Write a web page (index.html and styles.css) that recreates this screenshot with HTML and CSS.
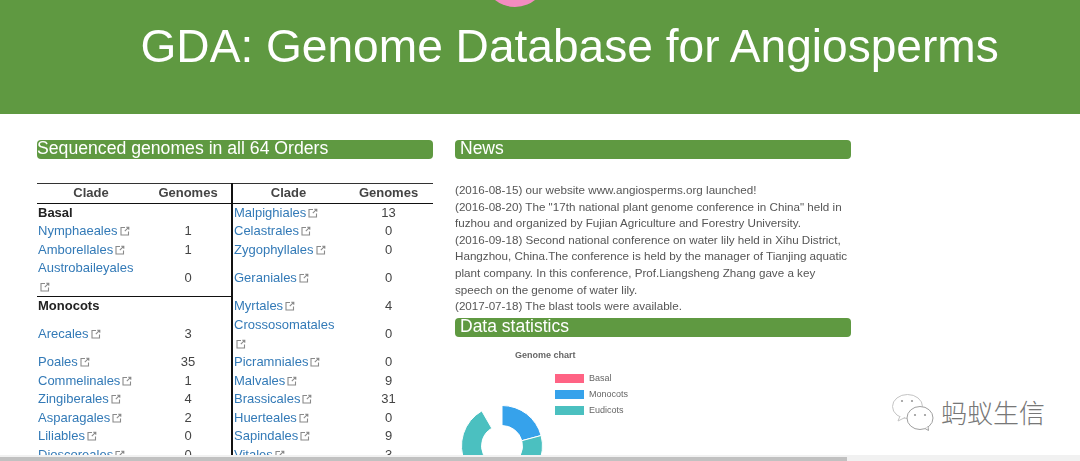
FILE: index.html
```html
<!DOCTYPE html>
<html lang="en">
<head>
<meta charset="utf-8">
<title>GDA: Genome Database for Angiosperms</title>
<link rel="stylesheet" href="styles.css">
</head>
<body>
<svg width="0" height="0" class="defs"><defs>
<symbol id="ext" viewBox="0 0 10 10"><path d="M5 1.500H1v7.500h7.500V5.500" fill="none" stroke="#8a8a8a" stroke-width="1.100"/><path d="M4.800 5.200 8.600 1.400M6.200 1.200H8.800V3.800" fill="none" stroke="#8a8a8a" stroke-width="1.100"/></symbol>
</defs></svg>
<div class="page">
<header class="banner">
  <div class="logo"></div>
  <h1>GDA: Genome Database for Angiosperms</h1>
</header>
<main class="content">
  <section class="col">
    <h2 class="bar flush">Sequenced genomes in all 64 Orders</h2>
    <table class="orders">
      <thead><tr><th class="c1">Clade</th><th class="c2">Genomes</th><th class="c3 divide">Clade</th><th class="c4">Genomes</th></tr></thead>
      <tbody>
        <tr><td class="clade">Basal</td><td></td><td class="divide"><a>Malpighiales</a><svg class="ext"><use href="#ext"/></svg></td><td class="num">13</td></tr>
        <tr><td><a>Nymphaeales</a><svg class="ext"><use href="#ext"/></svg></td><td class="num">1</td><td class="divide"><a>Celastrales</a><svg class="ext"><use href="#ext"/></svg></td><td class="num">0</td></tr>
        <tr><td><a>Amborellales</a><svg class="ext"><use href="#ext"/></svg></td><td class="num">1</td><td class="divide"><a>Zygophyllales</a><svg class="ext"><use href="#ext"/></svg></td><td class="num">0</td></tr>
        <tr><td class="rule"><a>Austrobaileyales</a> <svg class="ext"><use href="#ext"/></svg></td><td class="num rule">0</td><td class="divide"><a>Geraniales</a><svg class="ext"><use href="#ext"/></svg></td><td class="num">0</td></tr>
        <tr><td class="clade">Monocots</td><td></td><td class="divide"><a>Myrtales</a><svg class="ext"><use href="#ext"/></svg></td><td class="num">4</td></tr>
        <tr><td><a>Arecales</a><svg class="ext"><use href="#ext"/></svg></td><td class="num">3</td><td class="divide"><a>Crossosomatales</a> <svg class="ext"><use href="#ext"/></svg></td><td class="num">0</td></tr>
        <tr><td><a>Poales</a><svg class="ext"><use href="#ext"/></svg></td><td class="num">35</td><td class="divide"><a>Picramniales</a><svg class="ext"><use href="#ext"/></svg></td><td class="num">0</td></tr>
        <tr><td><a>Commelinales</a><svg class="ext"><use href="#ext"/></svg></td><td class="num">1</td><td class="divide"><a>Malvales</a><svg class="ext"><use href="#ext"/></svg></td><td class="num">9</td></tr>
        <tr><td><a>Zingiberales</a><svg class="ext"><use href="#ext"/></svg></td><td class="num">4</td><td class="divide"><a>Brassicales</a><svg class="ext"><use href="#ext"/></svg></td><td class="num">31</td></tr>
        <tr><td><a>Asparagales</a><svg class="ext"><use href="#ext"/></svg></td><td class="num">2</td><td class="divide"><a>Huerteales</a><svg class="ext"><use href="#ext"/></svg></td><td class="num">0</td></tr>
        <tr><td><a>Liliables</a><svg class="ext"><use href="#ext"/></svg></td><td class="num">0</td><td class="divide"><a>Sapindales</a><svg class="ext"><use href="#ext"/></svg></td><td class="num">9</td></tr>
        <tr><td><a>Dioscoreales</a><svg class="ext"><use href="#ext"/></svg></td><td class="num">0</td><td class="divide"><a>Vitales</a><svg class="ext"><use href="#ext"/></svg></td><td class="num">3</td></tr>
      </tbody>
    </table>
  </section>
  <section class="col">
    <h2 class="bar">News</h2>
    <div class="news">
      <p>(2016-08-15) our website www.angiosperms.org launched!</p>
      <p>(2016-08-20) The "17th national plant genome conference in China" held in fuzhou and organized by Fujian Agriculture and Forestry University.</p>
      <p>(2016-09-18) Second national conference on water lily held in Xihu District, Hangzhou, China.The conference is held by the manager of Tianjing aquatic plant company. In this conference, Prof.Liangsheng Zhang gave a key speech on the genome of water lily.</p>
      <p>(2017-07-18) The blast tools were available.</p>
    </div>
    <h2 class="bar stats">Data statistics</h2>
    <div class="chart">
      <div class="chart-title">Genome chart</div>
      <ul class="legend">
        <li><span class="swatch basal"></span>Basal</li>
        <li><span class="swatch mono"></span>Monocots</li>
        <li><span class="swatch eudi"></span>Eudicots</li>
      </ul>
      <svg class="donut" width="90" height="90" viewBox="0 0 90 90">
        <path d="M45 4.500A40.500 40.500 0 0 1 84.100 34.500L64.800 39.700A20.500 20.500 0 0 0 45 24.500Z" fill="#36a2eb" stroke="#fff" stroke-width="1"/>
        <path d="M84.100 34.500A40.500 40.500 0 1 1 24.750 9.900L34.750 27.250A20.500 20.500 0 1 0 64.800 39.700Z" fill="#4bc0c0" stroke="#fff" stroke-width="1"/>
      </svg>
    </div>
  </section>
</main>
</div>
<div class="scrollbar"><div class="thumb"></div></div>
<aside class="watermark">
  <svg width="42" height="38" viewBox="0 0 42 38"><ellipse cx="15.500" cy="13.500" rx="15" ry="12" fill="#fff" stroke="#c4c4c4" stroke-width="1"/><path d="M8 23l-2 5 7-3.500" fill="#fff" stroke="#c4c4c4" stroke-width="1"/><ellipse cx="28" cy="25" rx="13" ry="11.500" fill="#fff" stroke="#a0a0a0" stroke-width="1"/><path d="M33 35.500l3.500 2-.5-4" fill="#fff" stroke="#a0a0a0" stroke-width="1"/><circle cx="10" cy="8" r="1.100" fill="#999"/><circle cx="20" cy="8" r="1.100" fill="#999"/><circle cx="23" cy="22" r="1.100" fill="#999"/><circle cx="33" cy="22" r="1.100" fill="#999"/></svg>
  <span>蚂蚁生信</span>
</aside>
</body>
</html>
```
FILE: styles.css
```css
* { box-sizing: border-box; }
html, body { margin: 0; height: 461px; overflow: hidden; }
body {
  display: flex;
  flex-direction: column;
  background: #fff;
  color: #444;
  font-family: "Liberation Sans", Arial, sans-serif;
  font-size: 13px;
  line-height: 18.57px;
}
.defs { position: absolute; }
.page {
  flex: 1;
  min-height: 0;
  display: flex;
  flex-direction: column;
  filter: blur(0.35px);
}
.banner {
  position: relative;
  flex: 0 0 114px;
  background: #5f9941;
  padding: 16px 0 0 140.500px;
  overflow: hidden;
}
.banner h1 {
  margin: 0;
  color: #fff;
  font-size: 46.100px;
  font-weight: 400;
  line-height: 60px;
  white-space: nowrap;
}
.logo {
  position: absolute;
  left: 483px;
  top: -57px;
  width: 64px;
  height: 64px;
  border-radius: 50%;
  background: #f48cc0;
}
.content {
  flex: 1;
  min-height: 0;
  overflow: hidden;
  display: flex;
  gap: 22px;
  padding: 26px 0 0 37px;
}
.col { flex: 0 0 396px; }
.bar {
  margin: 0;
  height: 19px;
  padding-left: 5px;
  background: #5f9941;
  border-radius: 4px;
  color: #fff;
  font-size: 17.500px;
  font-weight: 400;
  line-height: 17px;
  white-space: nowrap;
}
.bar.flush { padding-left: 0; font-size: 17.650px; }
.orders {
  width: 396px;
  margin-top: 24px;
  border-collapse: collapse;
  table-layout: fixed;
  border-top: 1px solid #333;
}
.orders th {
  padding: 0;
  height: 19px;
  font-weight: 700;
  text-align: center;
  border-bottom: 1px solid #111;
}
.orders td { padding: 0 0 0 1px; vertical-align: middle; }
.c1 { width: 108px; }
.c2 { width: 87px; }
.c3 { width: 112px; }
.c4 { width: 89px; }
.orders .divide { border-left: 2px solid #111; }
.orders .rule { border-bottom: 1px solid #111; }
.orders .num { padding: 0; text-align: center; }
.orders .clade { font-weight: 700; color: #222; }
.orders a { color: #337ab7; }
.ext { width: 10px; height: 10px; margin-left: 2px; vertical-align: -1px; }
.news { margin-top: 23px; font-size: 11.650px; line-height: 16.600px; color: #555; }
.news p { margin: 0; }
.bar.stats { margin-top: 3px; }
.chart { position: relative; height: 140px; color: #666; }
.chart-title {
  position: absolute;
  left: 60px;
  top: 12px;
  font-size: 9px;
  font-weight: 700;
  line-height: 12px;
}
.legend {
  position: absolute;
  left: 100px;
  top: 33.500px;
  margin: 0;
  padding: 0;
  list-style: none;
  font-size: 9px;
  line-height: 12px;
}
.legend li { display: flex; align-items: center; gap: 5px; height: 16px; }
.swatch { width: 29px; height: 9px; }
.basal { background: #ff6384; }
.mono { background: #36a2eb; }
.eudi { background: #4bc0c0; }
.donut { position: absolute; left: 1.500px; top: 64px; }
.scrollbar { flex: 0 0 6px; background: #f1f1f1; padding-top: 2px; }
.thumb { width: 847px; height: 4px; background: #c1c1c1; }
.watermark {
  position: absolute;
  left: 892px;
  top: 393px;
  display: flex;
  align-items: center;
  gap: 7px;
  color: #777;
  font-family: "Noto Sans CJK SC", sans-serif;
  font-size: 26px;
  font-weight: 300;
  line-height: 38px;
}
```
